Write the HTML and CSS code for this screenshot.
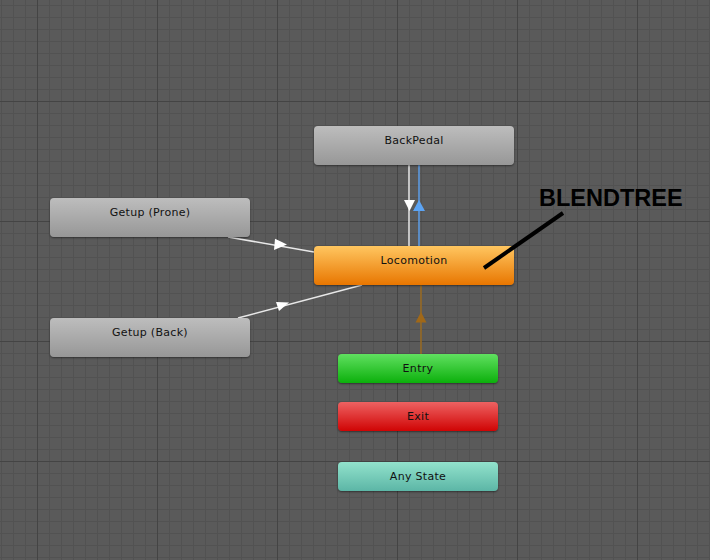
FILE: index.html
```html
<!DOCTYPE html>
<html>
<head>
<meta charset="utf-8">
<link rel="stylesheet" href="styles.css">
</head>
<body>
<div class="canvas">
  <svg class="edges" width="710" height="560" viewBox="0 0 710 560">
    <line x1="409" y1="164" x2="409" y2="246" stroke="#e8e8e8" stroke-width="1.5"/>
    <polygon points="404,200 415,200 409.5,211" fill="#ffffff"/>
    <line x1="419" y1="164" x2="419" y2="246" stroke="#5c9ee8" stroke-width="1.5"/>
    <polygon points="413,211 425,211 419,200" fill="#5ca4f4"/>
    <line x1="228" y1="237" x2="314" y2="252" stroke="#e8e8e8" stroke-width="1.5"/>
    <polygon points="275,238.8 287,244.5 274,250" fill="#ffffff"/>
    <line x1="238" y1="318" x2="362" y2="285" stroke="#e8e8e8" stroke-width="1.5"/>
    <polygon points="276,302 289,302.5 279,311" fill="#ffffff"/>
    <line x1="421" y1="285" x2="421" y2="354" stroke="#9c6c22" stroke-width="1.5"/>
    <polygon points="415.5,322.5 426.5,322.5 421,312" fill="#a06818"/>
  </svg>
  <div class="node gray n-backpedal">BackPedal</div>
  <div class="node gray n-prone">Getup (Prone)</div>
  <div class="node orange n-loco">Locomotion</div>
  <div class="node gray n-back">Getup (Back)</div>
  <div class="node small green n-entry">Entry</div>
  <div class="node small red n-exit">Exit</div>
  <div class="node small teal n-any">Any State</div>
  <svg class="annot" width="710" height="560" viewBox="0 0 710 560">
    <line x1="484" y1="268" x2="563" y2="213" stroke="#000" stroke-width="4"/>
  </svg>
  <div class="label">BLENDTREE</div>
</div>
</body>
</html>
```
FILE: styles.css
```css
html, body {
  margin: 0;
  padding: 0;
  width: 710px;
  height: 560px;
  overflow: hidden;
}
.canvas {
  position: relative;
  width: 710px;
  height: 560px;
  background-color: #5a5a5a;
  background-image:
    linear-gradient(to right, #444444 1px, transparent 1px),
    linear-gradient(to bottom, #444444 1px, transparent 1px),
    linear-gradient(to right, #525252 1px, transparent 1px),
    linear-gradient(to bottom, #525252 1px, transparent 1px);
  background-size: 120px 120px, 120px 120px, 12px 12px, 12px 12px;
  background-position: 37px 0, 0 101px, 1px 0, 0 5px;
  font-family: "DejaVu Sans", Verdana, sans-serif;
}
.edges, .annot {
  position: absolute;
  left: 0;
  top: 0;
}
.annot { z-index: 3; }
.node {
  position: absolute;
  box-sizing: border-box;
  width: 200px;
  height: 39px;
  border-radius: 4px;
  padding-top: 8px;
  font-size: 11px;
  line-height: 14px;
  text-align: center;
  color: #111;
  letter-spacing: 0.3px;
  box-shadow: 0 1px 2px rgba(0,0,0,0.45);
  z-index: 2;
}
.small {
  width: 160px;
  height: 29px;
}
.gray { background: linear-gradient(to bottom, #bdbdbd, #979797); }
.orange { background: linear-gradient(to bottom, #ffc660, #e87600); }
.green { background: linear-gradient(to bottom, #60e060, #0cb00c); }
.red { background: linear-gradient(to bottom, #ee6262, #d00404); }
.teal { background: linear-gradient(to bottom, #92e2cc, #5cb6a6); }
.n-backpedal { left: 314px; top: 126px; }
.n-loco { left: 314px; top: 246px; }
.n-prone { left: 50px; top: 198px; }
.n-back { left: 50px; top: 318px; }
.n-entry { left: 338px; top: 354px; }
.n-exit { left: 338px; top: 402px; }
.n-any { left: 338px; top: 462px; }
.label {
  position: absolute;
  left: 539px;
  top: 185px;
  font-family: "Liberation Sans", Arial, sans-serif;
  font-weight: bold;
  font-size: 23.5px;
  line-height: 27px;
  color: #000;
  z-index: 3;
}
```
